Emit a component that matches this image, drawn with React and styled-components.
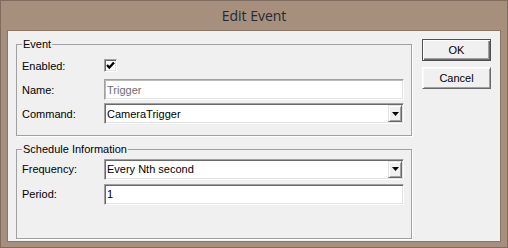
import React from 'react';
import styled, { createGlobalStyle } from 'styled-components';

const Global = createGlobalStyle`
  html, body { margin: 0; padding: 0; background: #ffffff; }
  body { font-family: "Liberation Sans", Arial, sans-serif; }
`;

const Window = styled.div`
  box-sizing: border-box;
  width: 508px;
  height: 248px;
  background: #a68f7d;
  border: 1px solid #7f6c5f;
  padding: 0 6px 5px;
  display: flex;
  flex-direction: column;
`;

const TitleBar = styled.div`
  flex: none;
  height: 29px;
  display: flex;
  align-items: center;
  justify-content: center;
  font-family: "Open Sans", "Noto Sans", sans-serif;
  font-size: 14px;
  color: #1f2a35;
`;

const Client = styled.div`
  flex: 1;
  min-height: 0;
  background: #f0f0f0;
  border: 1px solid #8a7667;
  padding: 7px 9px 2px 8px;
  display: flex;
  gap: 10px;
`;

const GroupColumn = styled.div`
  width: 396px;
  display: flex;
  flex-direction: column;
  gap: 7px;
`;

const Group = styled.fieldset`
  flex: 1 1 0;
  min-height: 0;
  margin: 0;
  box-sizing: border-box;
  border: 1px solid #a0a0a0;
  box-shadow: 1px 1px 0 #ffffff;
  padding: ${(p) => p.$padTop}px 6px 0 5px;
`;

const Legend = styled.legend`
  padding: 0 1px;
  font-size: 11px;
  line-height: 13px;
  color: #000;
`;

const FieldGrid = styled.div`
  display: grid;
  grid-template-columns: 82px 300px;
  grid-auto-rows: 21px;
  row-gap: ${(p) => p.$gap}px;
  align-items: center;
`;

const Label = styled.span`
  font-size: 11px;
  color: #000;
`;

const sunken = `
  box-sizing: border-box;
  background: #ffffff;
  border-style: solid;
  border-width: 1px;
  border-color: #a0a0a0 #ffffff #ffffff #a0a0a0;
`;

const TextBox = styled.div`
  ${sunken}
  height: 21px;
  width: 300px;
  box-shadow: inset 1px 1px 0 ${(p) => (p.$disabled ? '#b9b9b9' : '#696969')},
    inset -1px -1px 0 #e3e3e3;
  padding: 0 2px 0 2px;
  display: flex;
  align-items: center;
  justify-content: space-between;
  font-size: 11px;
  color: ${(p) => (p.$disabled ? '#6d6d6d' : '#000')};
`;

const DropButton = styled.span`
  box-sizing: border-box;
  width: 14px;
  height: 17px;
  margin-right: -1px;
  background: #f0f0f0;
  border-style: solid;
  border-width: 1px;
  border-color: #e3e3e3 #696969 #696969 #e3e3e3;
  box-shadow: inset 1px 1px 0 #ffffff, inset -1px -1px 0 #a0a0a0;
  display: flex;
  align-items: center;
  justify-content: center;
`;

const CheckBox = styled.span`
  ${sunken}
  width: 13px;
  height: 13px;
  box-shadow: inset 1px 1px 0 #696969, inset -1px -1px 0 #e3e3e3;
  display: flex;
  align-items: center;
  justify-content: center;
`;

const ButtonColumn = styled.div`
  width: 69px;
  padding-top: 1px;
  display: flex;
  flex-direction: column;
  gap: 6px;
`;

const Button = styled.button`
  box-sizing: border-box;
  width: 69px;
  height: 22px;
  margin: 0;
  padding: 0;
  background: #f0f0f0;
  font-family: "Liberation Sans", Arial, sans-serif;
  font-size: 11px;
  color: #000;
  border-style: solid;
  border-width: 1px;
  border-color: ${(p) => (p.$default ? '#505050' : '#ffffff #696969 #696969 #ffffff')};
  box-shadow: ${(p) =>
    p.$default
      ? 'inset 1px 1px 0 #ffffff, inset -1px -1px 0 #696969, inset -2px -2px 0 #a0a0a0'
      : 'inset 1px 1px 0 #f8f8f8, inset -1px -1px 0 #a0a0a0'};
`;

const Arrow = () => (
  <svg width="7" height="4" viewBox="0 0 7 4">
    <polygon points="0,0 7,0 3.5,4" fill="#000" />
  </svg>
);

const Check = () => (
  <svg width="9" height="9" viewBox="0 0 9 9">
    <polyline points="1,4 3.3,6.5 8,1.5" fill="none" stroke="#000" strokeWidth="2.3" />
  </svg>
);

const Combo = ({ value }) => (
  <TextBox>
    <span>{value}</span>
    <DropButton>
      <Arrow />
    </DropButton>
  </TextBox>
);

export default function App() {
  return (
    <>
      <Global />
      <Window>
        <TitleBar>Edit Event</TitleBar>
        <Client>
          <GroupColumn>
            <Group $padTop={4}>
              <Legend>Event</Legend>
              <FieldGrid $gap={3}>
                <Label>Enabled:</Label>
                <CheckBox>
                  <Check />
                </CheckBox>
                <Label>Name:</Label>
                <TextBox $disabled>Trigger</TextBox>
                <Label>Command:</Label>
                <Combo value="CameraTrigger" />
              </FieldGrid>
            </Group>
            <Group $padTop={3}>
              <Legend>Schedule Information</Legend>
              <FieldGrid $gap={4}>
                <Label>Frequency:</Label>
                <Combo value="Every Nth second" />
                <Label>Period:</Label>
                <TextBox>1</TextBox>
              </FieldGrid>
            </Group>
          </GroupColumn>
          <ButtonColumn>
            <Button $default>OK</Button>
            <Button>Cancel</Button>
          </ButtonColumn>
        </Client>
      </Window>
    </>
  );
}
